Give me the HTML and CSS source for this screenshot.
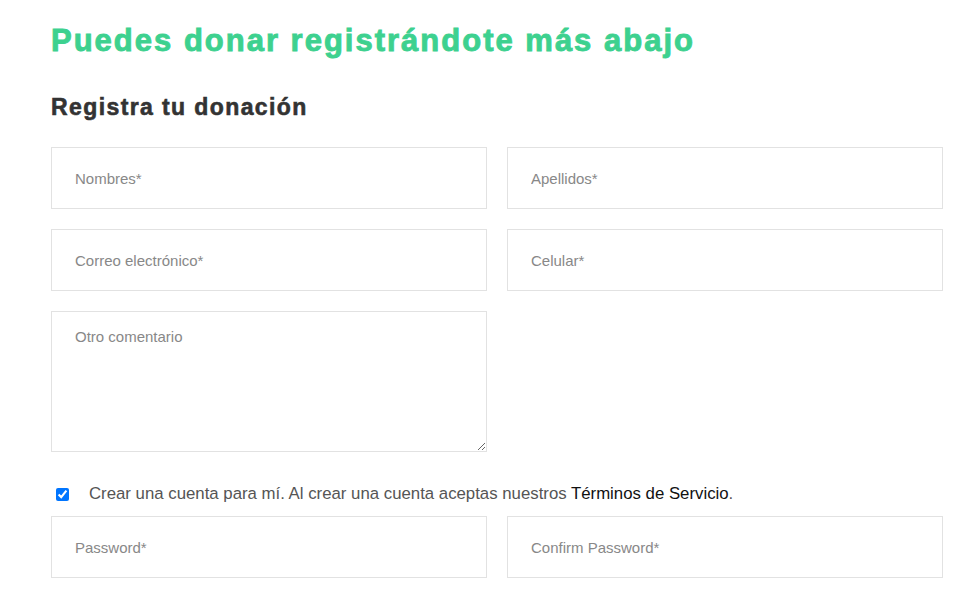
FILE: index.html
```html
<!DOCTYPE html>
<html lang="es">
<head>
  <meta charset="UTF-8">
  <meta name="viewport" content="width=device-width, initial-scale=1">
  <title>Registra tu donación</title>
  <link rel="stylesheet" href="styles.css">
</head>
<body>

<div class="wrap">
  <h1 class="title">Puedes donar registrándote más abajo</h1>
  <h2 class="subtitle">Registra tu donación</h2>

  <form class="donation-form">
    <div class="row">
      <input type="text" placeholder="Nombres*">
      <input type="text" placeholder="Apellidos*">
    </div>
    <div class="row">
      <input type="email" placeholder="Correo electrónico*">
      <input type="text" placeholder="Celular*">
    </div>
    <div class="row">
      <textarea placeholder="Otro comentario"></textarea>
    </div>

    <label class="account">
      <input type="checkbox" checked>
      <span>Crear una cuenta para mí. Al crear una cuenta aceptas nuestros <a href="#">Términos de Servicio</a>.</span>
    </label>

    <div class="row">
      <input type="password" placeholder="Password*">
      <input type="password" placeholder="Confirm Password*">
    </div>
  </form>
</div>

</body>
</html>
```

FILE: styles.css
```css
body {
  margin: 0;
  background: #fff;
  font-family: 'Liberation Sans', Arial, sans-serif;
}

.wrap {
  width: 892px;
  padding: 21px 0 0 51px;
}

.title {
  margin: 0;
  font-size: 31px;
  line-height: 40px;
  letter-spacing: 2px;
  font-weight: bold;
  color: #3dd18f;
  -webkit-text-stroke: 0.9px #3dd18f;
}

.subtitle {
  margin: 31px 0 25px;
  font-size: 23px;
  line-height: 30px;
  letter-spacing: 1.4px;
  font-weight: bold;
  color: #333;
  -webkit-text-stroke: 0.6px #333;
}

.row {
  display: flex;
  gap: 20px;
  margin-bottom: 20px;
}

.row input,
.row textarea {
  box-sizing: border-box;
  width: 436px;
  height: 62px;
  padding: 0 23px;
  border: 1px solid #e2e2e2;
  border-radius: 0;
  font-family: inherit;
  font-size: 15px;
  color: #333;
  outline: none;
}

.row textarea {
  height: 141px;
  padding: 16px 23px;
  resize: vertical;
}

::placeholder {
  color: #888;
  opacity: 1;
}

.account {
  display: flex;
  align-items: center;
  margin: 32px 0 12px 5px;
  font-size: 16.8px;
  color: #555;
}

.account input {
  width: 13px;
  height: 13px;
  margin: 0 20px 0 0;
}

.account a {
  color: #111;
  text-decoration: none;
}
```
